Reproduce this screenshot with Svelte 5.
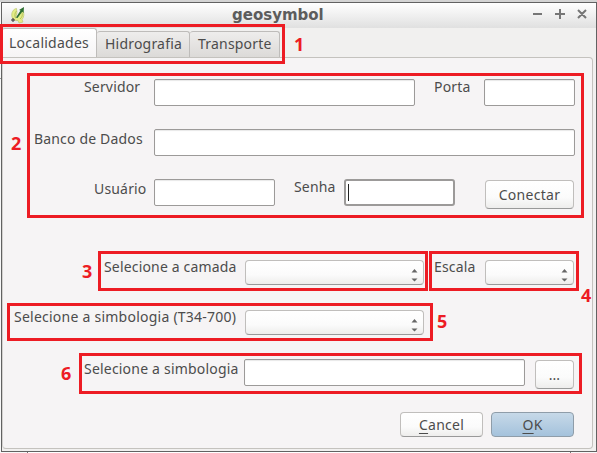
<script>
  const notes = [
    { n: 1, x: 0, y: 24, w: 285, h: 40, tx: 294, ty: 32 },
    { n: 2, x: 27, y: 73, w: 557, h: 145, tx: 11, ty: 131 },
    { n: 3, x: 98, y: 251, w: 330, h: 40, tx: 82, ty: 259 },
    { n: 4, x: 429, y: 251, w: 150, h: 40, tx: 581, ty: 283 },
    { n: 5, x: 7, y: 303, w: 426, h: 38, tx: 437, ty: 309 },
    { n: 6, x: 79, y: 353, w: 503, h: 41, tx: 61, ty: 361 }
  ];
</script>

{#snippet combo(cls)}
  <div class="combo {cls}">
    <svg width="7" height="13" viewBox="0 0 7 13"><path d="M.5 3.5 3.5 0l3 3.5zM.5 9.5l3 3 3-3z" fill="#666" /></svg>
  </div>
{/snippet}

<div class="screen">
  <div class="window">
    <header>
      <svg class="logo" width="16" height="18" viewBox="0 0 16 18">
        <path d="M6.5 2.5C3 3 1 7 2 11c.6 2.500 3 4 6 3.500l1 2.500 4-1-1-2.500c2-2 2.500-6 1-9L11 6 8 10 5.500 12 7 7z" fill="#e4ee86" stroke="#bcc774" stroke-width=".7" />
        <path d="M6.500 5C4.500 7 4.500 10 5.500 12M12 7c.8 2 0 4.500-2 6" fill="none" stroke="#a9b656" stroke-width=".8" />
        <path d="M6 11.500 10.500 4.500 9 4l5-3-.5 6-1.300-1.200L7.500 12z" fill="#2c6e30" />
        <path d="M1 14h4M3 12v4" stroke="#333" stroke-width="1" />
      </svg>
      <h1>geosymbol</h1>
      <svg class="controls" width="56" height="12" viewBox="0 0 56 12">
        <path d="M1 6h9M23 6h10M28 1v10M46 2l8 8M54 2l-8 8" fill="none" stroke="#767676" stroke-width="2" />
      </svg>
    </header>
    <nav>
      <div class="tab active"><span>Localidades</span></div>
      <div class="tab hid"><span>Hidrografia</span></div>
      <div class="tab tra"><span>Transporte</span></div>
    </nav>
    <main>
      <div class="row r1">
        <label class="servidor" for="servidor">Servidor</label><input id="servidor" class="w261" />
        <label class="porta" for="porta">Porta</label><input id="porta" class="w91" />
      </div>
      <div class="row r2">
        <label class="banco" for="banco">Banco de Dados</label><input id="banco" class="w421" />
      </div>
      <div class="row r3">
        <label class="usuario" for="usuario">Usuário</label><input id="usuario" class="w121" />
        <label class="senha" for="senha">Senha</label>
        <div class="focused" id="senha"><i></i></div>
        <button class="conectar">Conectar</button>
      </div>
      <div class="row r4">
        <span class="label camada">Selecione a camada</span>{@render combo('wide')}
        <span class="label escala">Escala</span>{@render combo('small')}
      </div>
      <div class="row r5">
        <span class="label t34">Selecione a simbologia (T34-700)</span>{@render combo('wide')}
      </div>
      <div class="row r6">
        <label class="simb" for="simb">Selecione a simbologia</label><input id="simb" class="w281" />
        <button class="browse">...</button>
      </div>
      <div class="actions">
        <button><u>C</u>ancel</button>
        <button class="ok"><u>O</u>K</button>
      </div>
    </main>
  </div>
  <div class="below"></div>
  <div class="edge"></div>
  {#each notes as a}
    <div class="box" style="left:{a.x}px;top:{a.y}px;width:{a.w}px;height:{a.h}px"></div>
    <b class="num" style="left:{a.tx}px;top:{a.ty}px">{a.n}</b>
  {/each}
</div>

<style>
  * { box-sizing: border-box; }
  .screen {
    position: relative; width: 597px; height: 453px; overflow: hidden;
    padding: 2px 0 0 1px; background: linear-gradient(#d4d4d4 2px, #f8f8f8 2px);
    font: 14px/20px "Noto Sans", sans-serif; color: #4c4c4c;
  }
  .window { width: 596px; height: 450px; border: 1px solid #626262; background: #f1f0ef; display: flex; flex-direction: column; }
  header { height: 25px; flex: none; display: flex; background: linear-gradient(#fff, #e0e0e0); }
  .logo { margin: 3px 0 0 8px; flex: none; }
  h1 { margin: 1px 0 0 206px; width: 94px; font: bold 15px/22px "DejaVu Sans", sans-serif; color: #5c5c5c; white-space: nowrap; }
  .controls { margin: 5px 0 0 206px; flex: none; }
  nav { height: 29px; flex: none; display: flex; align-items: flex-end; white-space: nowrap; letter-spacing: .2px; }
  .tab { height: 26px; border: 1px solid #bebcba; border-bottom: 0; border-left: 0; border-radius: 3px 3px 0 0; background: linear-gradient(#eeedec, #dcdad8); padding-top: 2px; }
  .active { width: 95px; height: 29px; background: linear-gradient(#fff, #f6f4f5); padding: 4px 0 0 7px; letter-spacing: .25px; }
  .hid { width: 93px; padding-left: 8px; }
  .tra { width: 90px; padding-left: 8px; }
  main { width: 591px; height: 392px; flex: none; background: #f6f4f5; border: 1px solid #c4c2be; border-left-color: #d4d2d0; border-radius: 0 4px 4px 4px; padding: 21px 0 0; }
  .row { display: flex; align-items: flex-start; height: 50px; }
  label, .label { flex: none; height: 20px; white-space: nowrap; letter-spacing: .17px; }
  .servidor { margin: -2px 0 0 81px; width: 70px; }
  .porta { margin: -2px 0 0 19px; width: 50px; }
  .banco { margin: 0 0 0 31px; width: 120px; }
  .usuario { margin-left: 91px; width: 60px; }
  .senha { margin: -2px 0 0 19px; width: 50px; }
  .r3 { height: 81px; }
  .camada { margin: -3px 0 0 101px; width: 141px; }
  .escala { margin: -3px 0 0 10px; width: 51px; }
  .t34 { margin: -3px 0 0 11px; width: 231px; letter-spacing: .24px; }
  .r5 { height: 49px; }
  .simb { margin-left: 81px; width: 160px; letter-spacing: .2px; }
  .r6 { height: 53px; }
  input { height: 27px; border: 1px solid #9c9a99; border-radius: 2px; background: #fff; box-shadow: inset 0 1px 1px #e8e8e8; padding: 0; flex: none; outline: none; }
  .w261 { width: 261px; } .w91 { width: 91px; } .w421 { width: 421px; } .w121 { width: 121px; } .w281 { width: 281px; }
  .focused { width: 111px; height: 27px; flex: none; border: 2px solid #9c9a99; border-radius: 3px; background: #fff; padding: 3px 0 0 2px; }
  .focused i { display: block; width: 1px; height: 17px; background: #222; }
  button, .combo { border: 1px solid #c0bebc; border-bottom-color: #999; border-radius: 4px; background: linear-gradient(#fff, #fbfbfb 60%, #eeedec); color: #4c4c4c; font: inherit; padding: 0; flex: none; }
  .conectar { width: 89px; height: 29px; margin: 1px 0 0 30px; letter-spacing: .3px; }
  .combo { height: 25px; display: flex; justify-content: flex-end; padding: 8px 5px 0 0; }
  .wide { width: 179px; }
  .small { width: 89px; }
  .browse { width: 39px; height: 29px; margin: 1px 0 0 10px; padding-top: 1px; }
  .actions { display: flex; gap: 8px; padding-left: 397px; }
  .actions button { width: 83px; height: 25px; line-height: 22px; letter-spacing: .25px; }
  .actions .ok { background: linear-gradient(#c7d9e8, #a4c2dc); border-color: #8f9da9; }
  u { text-underline-offset: 3px; text-decoration-thickness: 1px; }
  .below { width: 544px; height: 1px; margin-left: 26px; border: 1px solid #777; border-width: 0 1px; background: #fff; }
  .edge { position: absolute; left: 0; top: 78px; width: 1px; height: 1px; background: #999; }
  .box { position: absolute; border: 3px solid #ed1c24; }
  .num { position: absolute; font: bold 18px/24px "Noto Sans", sans-serif; color: #ed1c24; }
</style>
